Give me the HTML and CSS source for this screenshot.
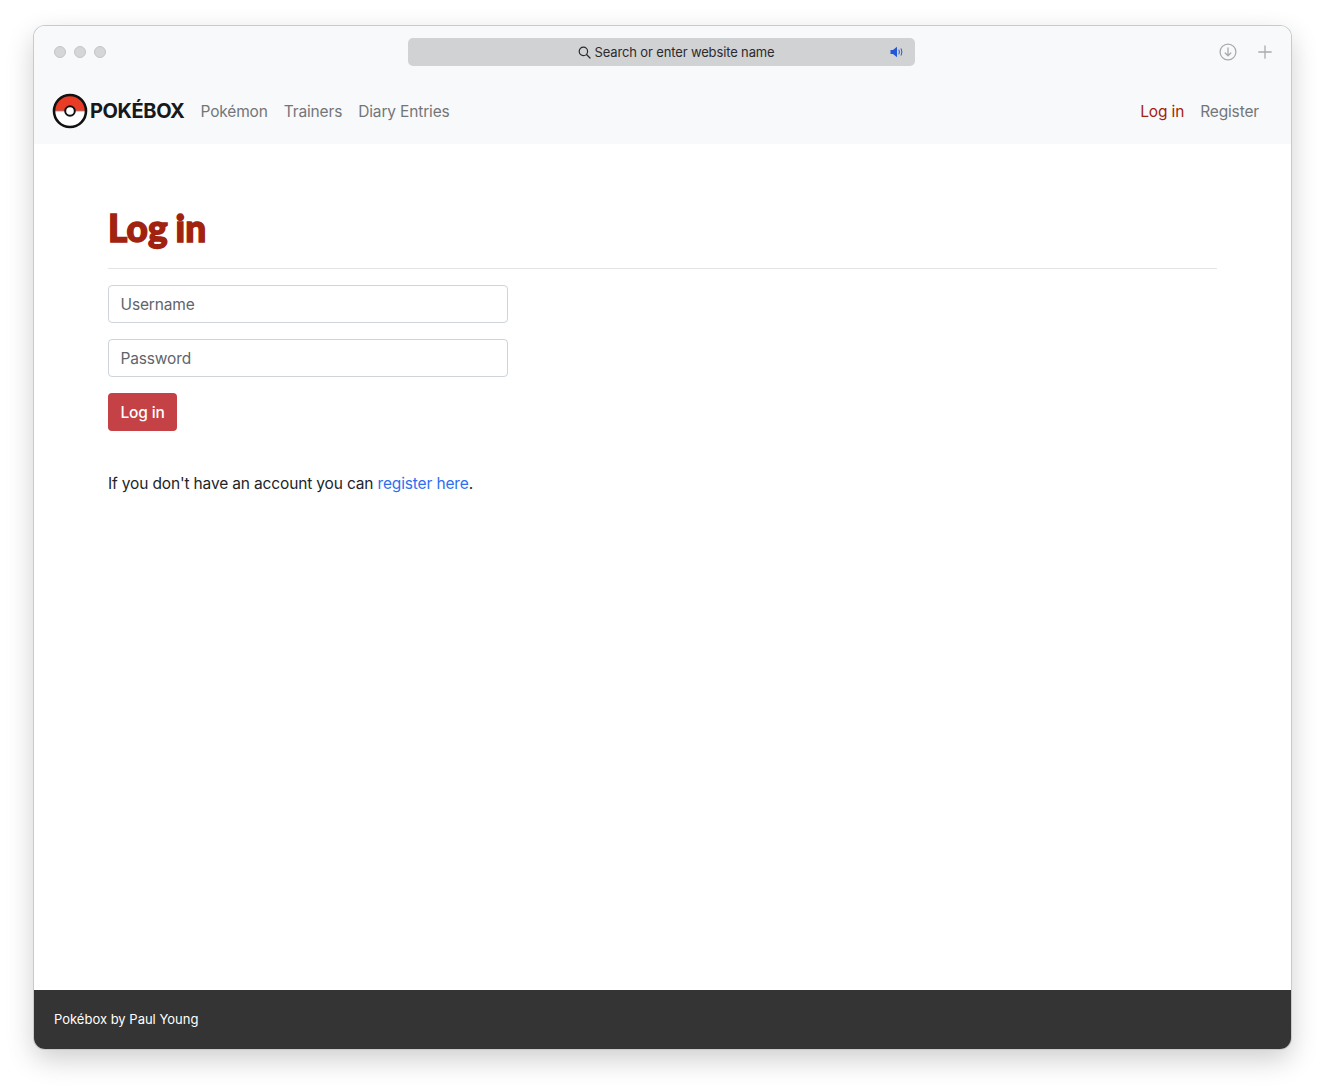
FILE: index.html
```html
<!DOCTYPE html>
<html lang="en">
<head>
  <meta charset="UTF-8" />
  <title>Pokébox</title>
  <link rel="stylesheet" href="styles.css">
</head>
<body>
  <div class="window">
    <div class="titlebar">
      <div class="lights">
        <span class="light"></span>
        <span class="light"></span>
        <span class="light"></span>
      </div>
      <div class="address">
        <svg class="search-icon" width="13" height="13" viewBox="0 0 13 13" fill="none" stroke="#2b2b2d" stroke-width="1.2" stroke-linecap="round">
          <circle cx="5.4" cy="5.4" r="4.2"/>
          <path d="M8.5 8.5 L12 12"/>
        </svg>
        <span>Search or enter website name</span>
        <svg class="sound-icon" width="14" height="12" viewBox="0 0 14 12" fill="none">
          <path d="M0.5 4 H3 L7 0.8 V11.2 L3 8 H0.5 Z" fill="#2257d6"/>
          <path d="M9 4 Q10 6 9 8 M11.2 2.8 Q12.8 6 11.2 9.2" stroke="#2257d6" stroke-width="1" stroke-linecap="round"/>
        </svg>
      </div>
      <div class="tools">
        <svg width="18" height="18" viewBox="0 0 18 18" fill="none" stroke="#a9abae" stroke-width="1.3" stroke-linecap="round" stroke-linejoin="round">
          <circle cx="9" cy="9" r="7.9"/>
          <path d="M9 5 V12.6 M6.2 10 L9 12.8 L11.8 10"/>
        </svg>
        <svg width="14" height="14" viewBox="0 0 14 14" fill="none" stroke="#a9abae" stroke-width="1.3" stroke-linecap="round">
          <path d="M7 0.8 V13.2 M0.8 7 H13.2"/>
        </svg>
      </div>
    </div>

    <nav class="navbar">
      <a class="brand" href="#">
        <svg width="36" height="36" viewBox="0 0 36 36">
          <path d="M2 18 A16 16 0 0 1 34 18 Z" fill="#e93c26"/>
          <path d="M2 18 A16 16 0 0 0 34 18 Z" fill="#ffffff"/>
          <path d="M2 18 H34" stroke="#8d8d8d" stroke-width="0.8"/>
          <circle cx="18" cy="18" r="16" fill="none" stroke="#111" stroke-width="2.6"/>
          <circle cx="18" cy="18" r="4.8" fill="#fff" stroke="#111" stroke-width="2"/>
        </svg>
        <span>POKÉBOX</span>
      </a>
      <div class="nav-links">
        <a href="#">Pokémon</a>
        <a href="#">Trainers</a>
        <a href="#">Diary Entries</a>
      </div>
      <div class="nav-links nav-right">
        <a class="active" href="#">Log in</a>
        <a href="#">Register</a>
      </div>
    </nav>

    <main class="content">
      <h1>Log in</h1>
      <hr>
      <form class="login-form">
        <input type="text" placeholder="Username">
        <input type="password" placeholder="Password">
        <button type="button">Log in</button>
      </form>
      <p>If you don't have an account you can <a href="#">register here</a>.</p>
    </main>

    <footer class="footer">Pokébox by Paul Young</footer>
  </div>
</body>
</html>
```

FILE: styles.css
```css
* {
  box-sizing: border-box;
}
body {
  margin: 0;
  padding: 26px 34px 42px;
  background: #fff;
  font-family: "Inter", sans-serif;
  font-size: 15.5px;
  letter-spacing: -0.15px;
  color: #212529;
}
a {
  text-decoration: none;
}
.window {
  display: flex;
  flex-direction: column;
  height: 1023px;
  background: #fff;
  border-radius: 11px;
  overflow: hidden;
  box-shadow: 0 0 0 1px #c9cacb, 0 10px 28px rgba(0, 0, 0, 0.2);
}
.titlebar {
  display: grid;
  grid-template-columns: 1fr 507px 1fr;
  align-items: center;
  height: 52px;
  padding: 0 19px 0 20px;
  background: #f8f9fa;
}
.lights {
  display: flex;
  gap: 8px;
}
.light {
  width: 12px;
  height: 12px;
  border-radius: 50%;
  background: #d5d6d8;
  border: 1px solid #c4c5c7;
}
.address {
  position: relative;
  display: flex;
  align-items: center;
  justify-content: center;
  gap: 4px;
  height: 28px;
  margin-left: -2px;
  padding-left: 30px;
  width: 507px;
  border-radius: 5px;
  background: #d1d2d4;
  font-size: 13px;
  letter-spacing: -0.14px;
  color: #2b2b2d;
}
.sound-icon {
  position: absolute;
  right: 11px;
  top: 8px;
}
.tools {
  display: flex;
  justify-content: flex-end;
  align-items: center;
  gap: 21px;
}
.navbar {
  display: flex;
  align-items: center;
  height: 66px;
  padding: 0 24px 0 18px;
  background: #f8f9fa;
}
.brand {
  display: flex;
  align-items: center;
  gap: 2px;
  margin-right: 8px;
  font-size: 20px;
  font-weight: 700;
  color: #17191c;
  letter-spacing: -0.4px;
}
.nav-links {
  display: flex;
}
.nav-links a {
  padding: 8px;
  color: #737679;
}
.nav-links a.active {
  color: #a0220f;
}
.nav-right {
  margin-left: auto;
}
.content {
  flex: 1;
  padding: 61px 74px 0;
}
h1 {
  margin: 0;
  font-family: "Lato", sans-serif;
  font-size: 37px;
  line-height: 46px;
  font-weight: 900;
  letter-spacing: 0.1px;
  word-spacing: -1px;
  color: #a0220f;
  -webkit-text-stroke: 1.4px #a0220f;
}
hr {
  height: 1px;
  margin: 17px 0 16px;
  border: 0;
  background: #e3e4e5;
}
.login-form {
  display: flex;
  flex-direction: column;
  align-items: flex-start;
  gap: 16px;
  width: 400px;
}
.login-form input {
  width: 100%;
  height: 38px;
  padding: 6px 11.5px;
  border: 1px solid #ced4da;
  border-radius: 4px;
  font-family: inherit;
  font-size: 15.5px;
  letter-spacing: -0.15px;
  color: #212529;
}
.login-form input::placeholder {
  color: #5f656b;
  opacity: 1;
}
.login-form button {
  height: 38px;
  padding: 0 12.5px;
  border: 0;
  border-radius: 4px;
  background: #c44145;
  color: #fff;
  font-family: inherit;
  font-size: 15.5px;
  font-weight: 500;
  letter-spacing: -0.15px;
}
.content p {
  margin: 41px 0 0;
  line-height: 24px;
  color: #212529;
}
.content p a {
  color: #2d6ff0;
}
.footer {
  display: flex;
  align-items: center;
  height: 59px;
  padding: 0 0 2px 20px;
  background: #343434;
  color: #fff;
  font-size: 13px;
  letter-spacing: 0;
}
```
